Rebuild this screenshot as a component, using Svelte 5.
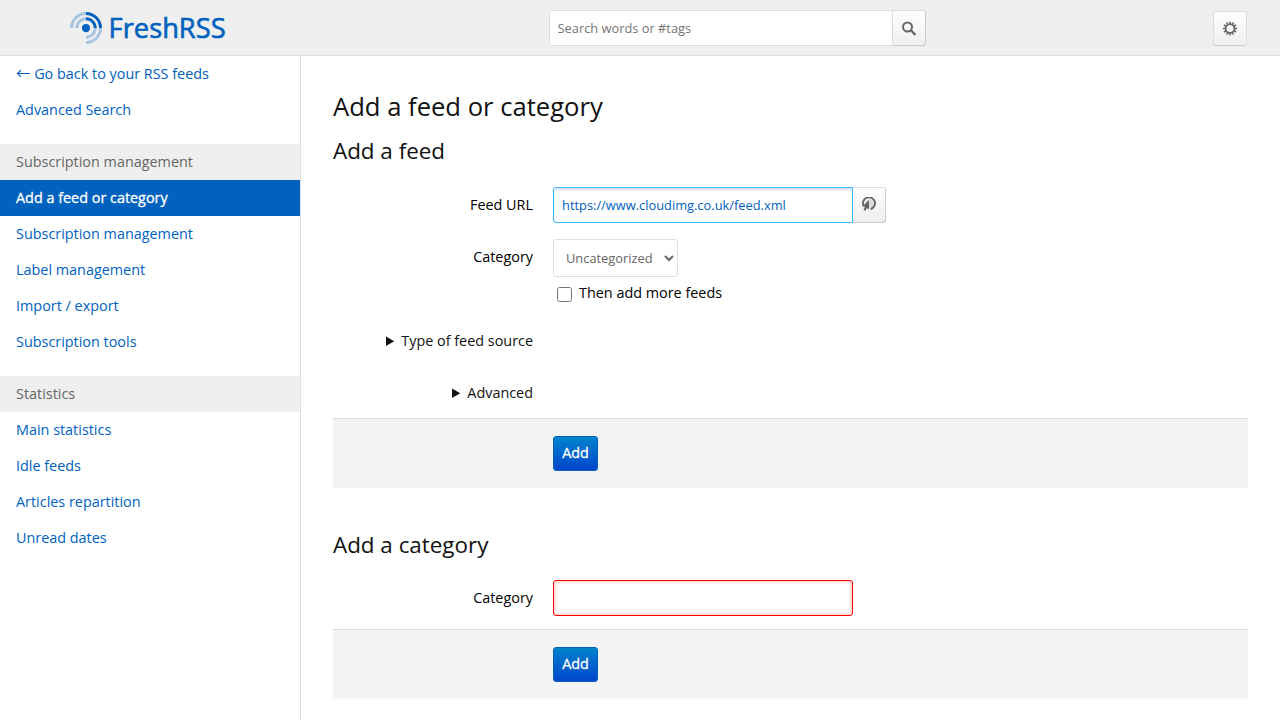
<script lang="ts">
  type NavItem = { label: string; header?: boolean; active?: boolean; back?: boolean };

  const sections: NavItem[][] = [
    [{ label: 'Go back to your RSS feeds', back: true }, { label: 'Advanced Search' }],
    [
      { label: 'Subscription management', header: true },
      { label: 'Add a feed or category', active: true },
      { label: 'Subscription management' },
      { label: 'Label management' },
      { label: 'Import / export' },
      { label: 'Subscription tools' },
    ],
    [
      { label: 'Statistics', header: true },
      { label: 'Main statistics' },
      { label: 'Idle feeds' },
      { label: 'Articles repartition' },
      { label: 'Unread dates' },
    ],
  ];

  let search = $state('');
  let feedUrl = $state('https://www.cloudimg.co.uk/feed.xml');
  let addMore = $state(false);
  let newCategory = $state('');
</script>

<header class="header">
  <a class="logo" href="#home" aria-label="FreshRSS">
    <svg width="160" height="36" viewBox="0 0 160 36">
      <g transform="translate(2 2) scale(0.125)" fill="none" stroke="#0062be" stroke-width="24">
        <circle cx="128" cy="128" r="33" fill="#0062be" stroke="none" />
        <g stroke-opacity="0.3">
          <path d="M12,128 A116,116 0 0 1 128,12" />
          <path d="M54,128 A74,74 0 0 1 128,54" />
          <path d="M244,128 A116,116 0 0 1 128,244" />
          <path d="M202,128 A74,74 0 0 1 128,202" />
        </g>
        <path d="M128,12 A116,116 0 0 1 244,128" />
        <path d="M128,54 A74,74 0 0 1 202,128" />
      </g>
      <text x="40.6" y="28" textLength="117" lengthAdjust="spacingAndGlyphs">FreshRSS</text>
    </svg>
  </a>

  <form class="stick search">
    <input type="search" placeholder="Search words or #tags" bind:value={search} />
    <button class="btn" type="button" aria-label="Search">
      <svg width="16" height="16" viewBox="0 0 16 16">
        <circle cx="6.5" cy="7" r="4.5" fill="none" stroke="#666" stroke-width="2" />
        <path d="M9.8 10.3l4.6 4.6" stroke="#666" stroke-width="2.2" />
      </svg>
    </button>
  </form>

  <button class="btn configure" type="button" aria-label="Configuration">
    <svg width="16" height="16" viewBox="0 0 16 16">
      <circle cx="8" cy="8.5" r="4.4" fill="none" stroke="#666" stroke-width="1.8" />
      {#each Array(12) as _, i}
        <path d="M8 1.5v2.5" stroke="#666" stroke-width="1.5" transform="rotate({i * 30} 8 8.5)" />
      {/each}
    </svg>
  </button>
</header>

<div class="global">
  <nav class="aside">
    {#each sections as section}
      <ul>
        {#each section as item}
          <li class:nav-header={item.header} class:active={item.active}>
            {#if item.header}
              {item.label}
            {:else}
              <a href="#nav">{#if item.back}<span class="arrow">←</span>{' '}{/if}{item.label}</a>
            {/if}
          </li>
        {/each}
      </ul>
    {/each}
  </nav>

  <main>
    <h1>Add a feed or category</h1>

    <h2>Add a feed</h2>
    <form>
      <div class="group">
        <label class="name" for="url_rss">Feed URL</label>
        <div class="stick">
          <input id="url_rss" class="url" type="text" bind:value={feedUrl} />
          <button class="btn" type="button" aria-label="Open feed">
            <svg width="16" height="16" viewBox="0 0 16 16">
              <circle cx="8.2" cy="6.4" r="4.2" fill="#ddd" />
              <path
                d="M2.4 8.5A6 6 0 1 1 9.6 12"
                fill="none"
                stroke="#666"
                stroke-width="1.9"
              />
              <path d="M8 3.2V12.6L5.9 10.9L4.5 13.7L2.4 12.7L4 9.8L1.1 9.6Z" fill="#666" />
            </svg>
          </button>
        </div>
      </div>

      <div class="group">
        <label class="name" for="category">Category</label>
        <div>
          <select id="category">
            <option>Uncategorized</option>
          </select>
          <label class="checkbox">
            <input type="checkbox" bind:checked={addMore} />
            <span>Then add more feeds</span>
          </label>
        </div>
      </div>

      <details class="source">
        <summary>Type of feed source</summary>
      </details>
      <details>
        <summary>Advanced</summary>
      </details>

      <div class="actions">
        <button class="btn btn-important" type="button">Add</button>
      </div>
    </form>

    <h2 class="second">Add a category</h2>
    <form>
      <div class="group">
        <label class="name" for="new-category">Category</label>
        <div>
          <input id="new-category" class="invalid" type="text" bind:value={newCategory} />
        </div>
      </div>
      <div class="actions">
        <button class="btn btn-important" type="button">Add</button>
      </div>
    </form>
  </main>
</div>

<style>
  :global(body) {
    background: #fff;
    color: #000;
    font-family: 'Open Sans', 'Noto Sans', sans-serif;
    font-size: 14.4px;
    overflow: hidden;
  }

  * {
    box-sizing: border-box;
  }

  a {
    color: #0062be;
    text-decoration: none;
  }

  .header {
    display: grid;
    grid-template-columns: 549px 377px 1fr;
    align-items: center;
    height: 56px;
    background: #efefef;
    border-bottom: 1px solid #ddd;
  }

  .logo {
    display: block;
    height: 36px;
    margin-left: 68px;
  }

  .logo svg {
    display: block;
  }

  .logo text {
    fill: #0062be;
    stroke: #0062be;
    stroke-width: 0.6px;
    font-size: 26.5px;
  }

  input,
  select,
  .btn {
    margin: 0;
    font-family: inherit;
    border: 1px solid #ddd;
    border-radius: 3px;
    outline: none;
  }

  input[type='search'],
  input[type='text'] {
    width: 300px;
    height: 36px;
    padding: 0 8px;
    background: #fff;
    color: #0062be;
    font-size: 12.85px;
    box-shadow: 0 2px 2px #eee inset;
  }

  input::placeholder {
    color: #757575;
  }

  .stick {
    display: flex;
  }

  .stick input {
    border-radius: 3px 0 0 3px;
  }

  .stick .btn {
    border-left: 0;
    border-radius: 0 3px 3px 0;
    width: 33px;
  }

  .search input[type='search'] {
    flex: 1;
    width: auto;
    padding-left: 7.5px;
    box-shadow: none;
  }

  .btn {
    display: flex;
    align-items: center;
    justify-content: center;
    height: 36px;
    padding: 0;
    background: linear-gradient(#fff, #eee);
    border-color: #ddd #ccc #ccc #ddd;
    cursor: pointer;
  }

  .configure {
    justify-self: end;
    width: 34px;
    height: 35px;
    margin: 1px 33px 0 0;
    border-color: #ddd #ddd #ccc;
  }

  .global {
    display: flex;
    height: 664px;
  }

  .aside {
    flex: none;
    width: 301px;
    border-right: 1px solid #ddd;
  }

  ul {
    margin: 0 0 16px;
    padding: 0;
    list-style: none;
  }

  li {
    height: 36px;
    padding: 0 16px;
    line-height: 35px;
    white-space: nowrap;
  }

  .arrow {
    font-family: 'Noto Sans CJK JP', sans-serif;
    line-height: 1;
  }

  .nav-header {
    background: #efefef;
    color: #666;
  }

  .active {
    background: #0062be;
  }

  .active a {
    color: #fff;
    -webkit-text-stroke: 0.3px #fff;
  }

  main {
    flex: 1;
    padding: 32px 32px 0;
  }

  h1,
  h2 {
    margin: 0;
    font-weight: 400;
    color: #111;
  }

  h1 {
    font-size: 25.6px;
    line-height: 38px;
  }

  h2 {
    margin: 8px 0 19px;
    font-size: 22.4px;
    line-height: 34px;
  }

  .second {
    margin: 40px 0 18px;
  }

  .group {
    display: grid;
    grid-template-columns: 200px 1fr;
    column-gap: 20px;
    margin-bottom: 16px;
  }

  .name {
    line-height: 35px;
    text-align: right;
  }

  input.url {
    border-color: #33bbff;
    box-shadow: 0 2px 2px #ddddff inset;
  }

  input.invalid {
    display: block;
    border-color: #f00;
    box-shadow: 0 0 2px 2px #fdd inset;
  }

  select {
    display: block;
    width: 125px;
    height: 38px;
    padding: 0 0 0 8px;
    background: #fff;
    color: #666;
    font-size: 12.85px;
  }

  .checkbox {
    display: flex;
    align-items: center;
    height: 32px;
    gap: 7px;
    padding-left: 4px;
  }

  .checkbox input {
    width: 15px;
    height: 15px;
    margin-top: 3px;
  }

  .checkbox span {
    padding-bottom: 1px;
  }

  details {
    width: 200px;
    height: 52px;
    line-height: 35px;
    text-align: right;
    color: #111;
  }

  .source {
    margin-top: -2px;
  }

  details + details {
    height: 43px;
  }

  .actions {
    height: 70px;
    padding: 17px 0 0 220px;
    background: #f4f4f4;
    border-top: 1px solid #ddd;
  }

  .group + .actions {
    margin-top: -3px;
  }

  .btn-important {
    width: 45px;
    height: 35px;
    padding-bottom: 2px;
    background: linear-gradient(#0084cc, #0045cc);
    border-color: #0062b7;
    color: #fff;
    font-size: 14.4px;
    -webkit-text-stroke: 0.3px #fff;
  }
</style>
